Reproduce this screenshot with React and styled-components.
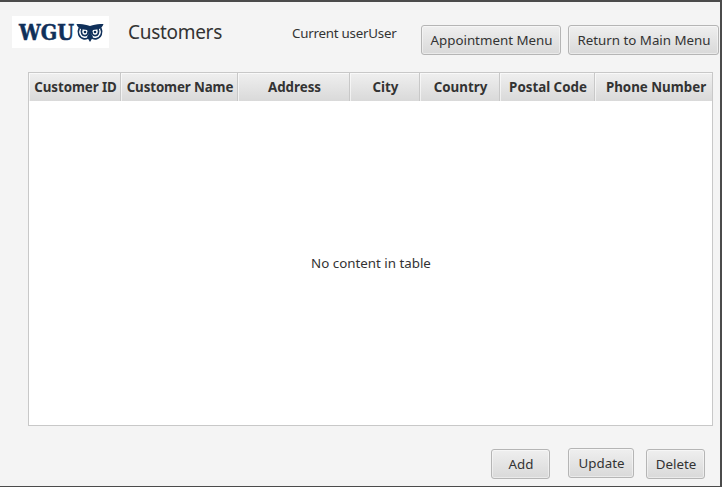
import React from "react";
import styled, { createGlobalStyle } from "styled-components";

const Global = createGlobalStyle`
  * { box-sizing: border-box; }
  body { margin: 0; }
`;

const Window = styled.main`
  width: 722px;
  height: 487px;
  display: flex;
  flex-direction: column;
  background: #f4f4f4;
  border: solid #4b4b4b;
  border-width: 2px 2px 1px 0;
  color: #333;
  font: 13.33px/20px "Noto Sans", "Open Sans", sans-serif;
  white-space: nowrap;
  overflow: hidden;
`;

const Header = styled.header`
  flex: none;
  display: flex;
  align-items: flex-start;
  height: 70px;
  padding: 14px 1px 0 12px;
`;

const LogoFrame = styled.div`
  flex: none;
  width: 97px;
  height: 32px;
  background: #fff;
`;

const LogoArt = styled.svg`
  display: block;
`;

const LogoText = styled.text`
  font: 700 21.5px "DejaVu Serif", serif;
  fill: #10305a;
  stroke: #10305a;
  stroke-width: 0.5px;
`;

const Title = styled.h1`
  flex: none;
  width: 164px;
  margin: 3px 0 0 19px;
  font-size: 19px;
  line-height: 26px;
  font-weight: 400;
  letter-spacing: -0.3px;
`;

const CurrentUser = styled.p`
  flex: none;
  display: flex;
  width: 129px;
  margin: 7px 0 0;
  letter-spacing: -0.23px;
`;

const MenuButtons = styled.nav`
  display: flex;
  gap: 7px;
  margin-top: 9px;
`;

const Button = styled.button`
  flex: none;
  width: ${(p) => p.$width}px;
  height: 30px;
  padding: 0 0 0 1px;
  border: 1px solid #b5b5b5;
  border-radius: 3px;
  background: linear-gradient(#efefef, #d9d9d9);
  box-shadow: inset 0 0 0 1px rgba(255, 255, 255, 0.45);
  color: inherit;
  font: inherit;
`;

const Table = styled.section`
  flex: none;
  display: flex;
  flex-direction: column;
  width: 685px;
  height: 354px;
  margin-left: 28px;
  border: 1px solid #c8c8c8;
  background: #fff;
`;

const HeadRow = styled.div`
  flex: none;
  display: grid;
  grid-template-columns: 92px 117px 112px 70px 80px 95px 117px;
  height: 28px;
  border-bottom: 1px solid #c8c8c8;
`;

const HeadCell = styled.div`
  padding-left: 2px;
  border-right: 1px solid #c8c8c8;
  background: linear-gradient(#efefef, #d9d9d9);
  box-shadow: inset 1px 1px 0 rgba(255, 255, 255, 0.6);
  line-height: 28px;
  font-weight: 700;
  text-align: center;
  letter-spacing: ${(p) => p.$spacing || 0}px;

  &:last-child {
    border-right: 0;
    padding-left: 5px;
  }
`;

const Placeholder = styled.div`
  flex: 1;
  display: flex;
  align-items: center;
  justify-content: center;
  padding-left: 1px;
`;

const Actions = styled.footer`
  display: flex;
  align-items: center;
  padding: 22px 15px 0 0;
  justify-content: flex-end;
  height: 52px;
`;

const ActionSlot = styled.div`
  display: flex;
  padding-top: ${(p) => (p.$raised ? 0 : 2)}px;
  margin-left: ${(p) => p.$gap}px;
`;

const columns = [
  { name: "Customer ID", spacing: -0.08 },
  { name: "Customer Name", spacing: -0.12 },
  { name: "Address" },
  { name: "City" },
  { name: "Country" },
  { name: "Postal Code" },
  { name: "Phone Number" },
];

function Logo() {
  return (
    <LogoFrame>
      <LogoArt width="97" height="32" viewBox="0 0 97 32">
        <LogoText x="7" y="24.300" textLength="55" lengthAdjust="spacingAndGlyphs">
          WGU
        </LogoText>
        <path
          d="M64.500 8c4.500 0 8 .2 11 1.300L78 10l2.500-.7C83.500 8.200 87 8 91.500 8c-.8 2.700-2.400 4.400-5 5.200l-5.500.8-1.500 4 1.500 3L78 26l-3-5 1.500-3-1.500-4-5.500-.8c-2.600-.8-4.400-2.500-5-5.200z"
          fill="#10305a"
        />
        <g fill="none" stroke="#10305a" strokeWidth="1.700">
          <path d="M67.300 12c-2.300 4.500-.3 9.800 4.700 10.800 2 .3 3.400-.2 4.500-1.300" />
          <path d="M88.700 12c2.300 4.500.3 9.800-4.700 10.800-2 .3-3.400-.2-4.500-1.300" />
          <path d="M70 13c-1.600 3.200 0 6.700 3 6.700 2.200 0 3.300-1.700 3-4" />
          <path d="M86 13c1.600 3.200 0 6.700-3 6.700-2.200 0-3.300-1.700-3-4" />
        </g>
        <circle cx="73" cy="16" r="1.300" fill="#10305a" />
        <circle cx="83" cy="16" r="1.300" fill="#10305a" />
      </LogoArt>
    </LogoFrame>
  );
}

export default function App() {
  return (
    <>
      <Global />
      <Window>
        <Header>
          <Logo />
          <Title>Customers</Title>
          <CurrentUser>
            <span>Current user</span>
            <span>User</span>
          </CurrentUser>
          <MenuButtons>
            <Button $width={140}>Appointment Menu</Button>
            <Button $width={151}>Return to Main Menu</Button>
          </MenuButtons>
        </Header>
        <Table>
          <HeadRow>
            {columns.map((c) => (
              <HeadCell key={c.name} $spacing={c.spacing}>
                {c.name}
              </HeadCell>
            ))}
          </HeadRow>
          <Placeholder>No content in table</Placeholder>
        </Table>
        <Actions>
          <ActionSlot>
            <Button $width={59}>Add</Button>
          </ActionSlot>
          <ActionSlot $gap={18} $raised>
            <Button $width={66}>Update</Button>
          </ActionSlot>
          <ActionSlot $gap={12}>
            <Button $width={59}>Delete</Button>
          </ActionSlot>
        </Actions>
      </Window>
    </>
  );
}
